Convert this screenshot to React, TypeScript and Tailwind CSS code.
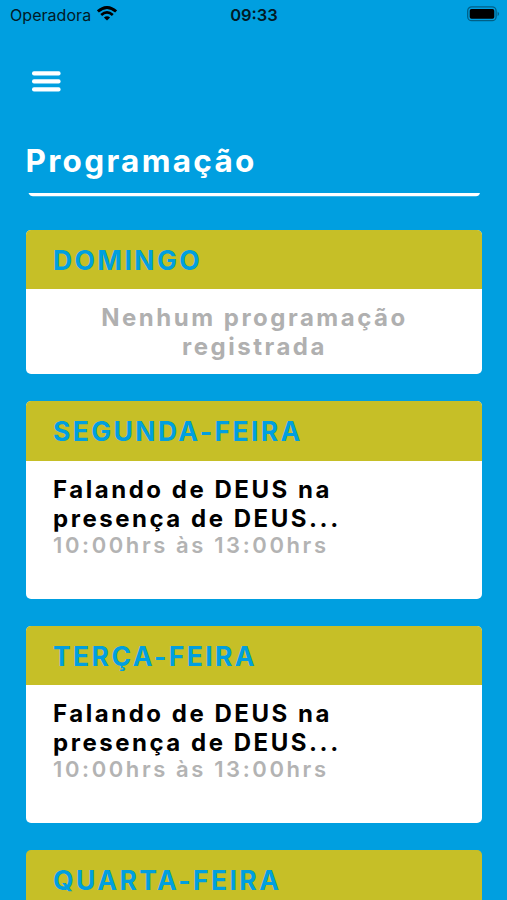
type Event = {
  title: string;
  time: string;
};

type Day = {
  name: string;
  events: Event[];
};

const event = {
  title: 'Falando de DEUS na presença de DEUS...',
  time: '10:00hrs às 13:00hrs',
};

const days: Day[] = [
  { name: 'DOMINGO', events: [] },
  { name: 'SEGUNDA-FEIRA', events: [event] },
  { name: 'TERÇA-FEIRA', events: [event] },
];

const WifiIcon = () => (
  <svg className="mb-[2px] h-[15px] w-[20px]" viewBox="0 0 20 15" fill="none" stroke="#000">
    <path d="M.9 5.5Q10-2.5 19.1 5.5" strokeWidth="2.9" />
    <path d="M4.2 9Q10 3.8 15.8 9" strokeWidth="2.7" />
    <path d="M10 14.5 6.9 11.5Q10 8.8 13.1 11.5Z" fill="#000" stroke="none" />
  </svg>
);

const BatteryIcon = () => (
  <svg className="h-[16px] w-[33px]" viewBox="0 0 33 16" fill="none">
    <rect x="0.7" y="0.9" width="28.4" height="13.8" rx="4" stroke="#000" strokeOpacity="0.4" strokeWidth="1.3" />
    <rect x="2.7" y="2.9" width="24.6" height="9.9" rx="1.8" fill="#000" />
    <path d="M30.6 5.4Q33.6 7.8 30.6 10.2Z" fill="#000" fillOpacity="0.4" />
  </svg>
);

const MenuIcon = () => (
  <svg className="h-[22px] w-[29px]" viewBox="0 0 29 22" fill="#fff">
    <rect y="0.2" width="28.6" height="4.3" rx="2" />
    <rect y="8.2" width="28.6" height="4.3" rx="2" />
    <rect y="16.2" width="28.6" height="4.3" rx="2" />
  </svg>
);

const StatusBar = () => (
  <div className="grid h-[30px] shrink-0 grid-cols-3 items-center pl-[10px] pr-[9px] text-[#021a26]">
    <div className="flex items-center gap-[6px] pb-px">
      <span className="text-[16px] leading-[20px] tracking-[0.05px]">Operadora</span>
      <WifiIcon />
    </div>
    <span className="pb-px text-center text-[16.5px] font-semibold leading-[20px]">09:33</span>
    <div className="-mr-[2px] flex justify-end pb-[2px]">
      <BatteryIcon />
    </div>
  </div>
);

const DayTitle = ({ name }: { name: string }) => (
  <h2 className="flex h-[59.5px] items-center bg-[#c6bf27] px-[27px] pt-[3px] text-[26.5px] font-bold tracking-[2.4px] text-[#009fe0]">
    {name}
  </h2>
);

const DayCard = ({ day }: { day: Day }) => (
  <section className="shrink-0 overflow-hidden rounded-[5px] bg-white">
    <DayTitle name={day.name} />
    {day.events.length === 0 ? (
      <p className="h-[85px] pl-[27px] pr-[26px] pt-[14px] text-center text-[24px] font-bold leading-[29px] tracking-[2.5px] text-[#b0b0b0]">
        Nenhum programação
        <br />
        registrada
      </p>
    ) : (
      day.events.map((item) => (
        <div key={item.title} className="h-[138px] px-[27px] pt-[14px]">
          <h3 className="w-[310px] text-[24px] font-bold leading-[29px] tracking-[2.53px] text-black">
            {item.title}
          </h3>
          <p className="text-[22px] font-semibold leading-[25px] tracking-[2.6px] text-[#b3b3b3]">
            {item.time}
          </p>
        </div>
      ))
    )}
  </section>
);

const App = () => {
  return (
    <main className="flex h-screen flex-col overflow-hidden bg-[#009fe0] font-['Inter','Liberation_Sans',sans-serif]">
      <StatusBar />

      <button className="ml-[32px] mt-[41px] h-[21px] w-[29px] shrink-0" aria-label="Menu">
        <MenuIcon />
      </button>

      <header className="mx-[26px] mt-[50px] shrink-0">
        <h1 className="-ml-[0.5px] text-[31.5px] font-bold leading-[38px] tracking-[2.3px] text-white">
          Programação
        </h1>
        <svg className="mt-[13px] h-[4px] w-[455px]" viewBox="0 0 455 4">
          <path d="M2.5 0H454Q453 3.2 450 3.2H7Q4 3.2 2.5 0Z" fill="#fff" />
        </svg>
      </header>

      <div className="mx-[26px] mr-[25px] mt-[32.6px] flex flex-col gap-[27px]">
        {days.map((day) => (
          <DayCard key={day.name} day={day} />
        ))}
        <section className="shrink-0 overflow-hidden rounded-t-[5px]">
          <DayTitle name="QUARTA-FEIRA" />
        </section>
      </div>
    </main>
  );
};

export default App;
